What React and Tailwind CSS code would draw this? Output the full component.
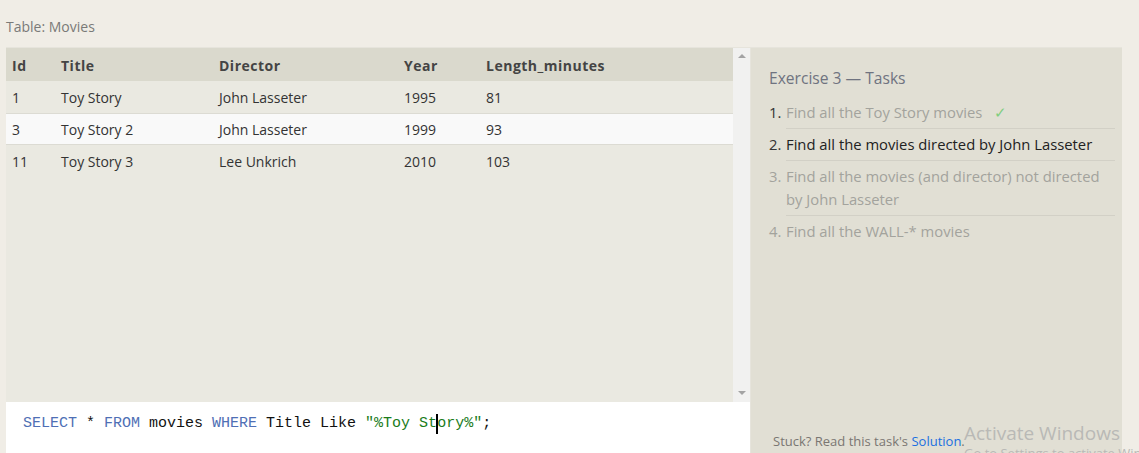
export default function App() {
  const ui = { fontFamily: '"Open Sans", "Noto Sans", sans-serif' };
  const mono = { fontFamily: '"Liberation Mono", "DejaVu Sans Mono", monospace' };
  const rows = [
    ["1", "Toy Story", "John Lasseter", "1995", "81"],
    ["3", "Toy Story 2", "John Lasseter", "1999", "93"],
    ["11", "Toy Story 3", "Lee Unkrich", "2010", "103"],
  ];
  const cols = "grid grid-cols-[49px_158px_185px_82px_1fr]";
  return (
    <div className="relative w-[1139px] h-[453px] overflow-hidden bg-[#f0ede6]" style={ui}>
      <div className="h-[47px] pl-[6px] pt-[17px] text-[14px] leading-[20px] text-[#7a7a78]">Table: Movies</div>
      <div className="flex h-[406px]">
        <div className="ml-[6px] w-[744px] flex flex-col">
          <div className="flex h-[355px] border-t border-[#e6e4dc]">
            <div className="flex-1 bg-[#eae9e1] text-[14px] text-[#333]">
              <div className={`${cols} h-[33px] pt-[2px] items-center bg-[#dad9cd] font-bold tracking-[0.5px] text-[#444]`}>
                {["Id", "Title", "Director", "Year", "Length_minutes"].map((h) => (
                  <div key={h} className="px-[6px]">{h}</div>
                ))}
              </div>
              {rows.map((r, i) => (
                <div
                  key={i}
                  className={`${cols} h-[32px] items-center ${i === 1 ? "bg-[#f9f9f9] border-y border-[#dcdbd3]" : ""}`}
                >
                  {r.map((c, j) => (
                    <div key={j} className="px-[6px]">{c}</div>
                  ))}
                </div>
              ))}
            </div>
            <div className="w-[17px] bg-[#f1f1f0] flex flex-col items-center justify-between pt-[6px] pb-[7px]">
              <div className="w-0 h-0 border-x-[4px] border-x-transparent border-b-[4px] border-b-[#a3a3a3]" />
              <div className="w-0 h-0 border-x-[4px] border-x-transparent border-t-[4px] border-t-[#a3a3a3]" />
            </div>
          </div>
          <div className="h-[51px] bg-white pl-[17px] pt-[12px] text-[15px] leading-[20px] text-[#111] whitespace-pre" style={mono}>
            <span className="text-[#4f6fb5]">SELECT</span> * <span className="text-[#4f6fb5]">FROM</span> movies <span className="text-[#4f6fb5]">WHERE</span> Title Like <span className="text-[#1b7c1b]">"%Toy St</span><span className="inline-block w-0 h-[20px] border-l-[2px] border-black align-top -ml-[1px] mr-[-1px]" /><span className="text-[#1b7c1b]">ory%"</span>;
          </div>
        </div>
        <div className="w-[372px] bg-[#e1dfd4] border-t border-l border-[#e6e4dc] flex flex-col pl-[18px] pr-[7px] pt-[19px] pb-[1px]">
          <div className="text-[15.6px] leading-[22px] text-[#6f7380]">Exercise 3 — Tasks</div>
          <ol className="mt-[8px] text-[14.8px] leading-[23px]">
            <li className="flex">
              <span className="w-[17px] shrink-0 text-[#333] pt-[4px]">1.</span>
              <div className="flex-1 py-[4px] border-b border-[#d2d0c6] text-[#a3a39d]">
                Find all the Toy Story movies <span className="ml-[8px] text-[#7fce7f]">✓</span>
              </div>
            </li>
            <li className="flex">
              <span className="w-[17px] shrink-0 text-[#333] pt-[4px]">2.</span>
              <div className="flex-1 py-[4px] border-b border-[#d2d0c6] text-[#222]">
                Find all the movies directed by John Lasseter
              </div>
            </li>
            <li className="flex">
              <span className="w-[17px] shrink-0 text-[#a3a39d] pt-[4px]">3.</span>
              <div className="flex-1 py-[4px] border-b border-[#d2d0c6] text-[#a3a39d]">
                Find all the movies (and director) not directed by John Lasseter
              </div>
            </li>
            <li className="flex">
              <span className="w-[17px] shrink-0 text-[#a3a39d] pt-[4px]">4.</span>
              <div className="flex-1 py-[4px] text-[#a3a39d]">Find all the WALL-* movies</div>
            </li>
          </ol>
          <div className="mt-auto pl-[4px] pb-[1px] text-[13px] leading-[20px] text-[#7a7672]">
            Stuck? Read this task's <span className="text-[#1a6fe0]">Solution</span>.
          </div>
        </div>
      </div>
      <div className="absolute left-[964px] top-[421px] text-[19px] leading-[25px] text-[#b9b9b6] whitespace-nowrap pointer-events-none" style={{ fontFamily: '"Open Sans", sans-serif' }}>
        Activate Windows
        <div className="text-[13px] leading-[16px] -mt-[1px]">Go to Settings to activate Windows.</div>
      </div>
    </div>
  );
}
